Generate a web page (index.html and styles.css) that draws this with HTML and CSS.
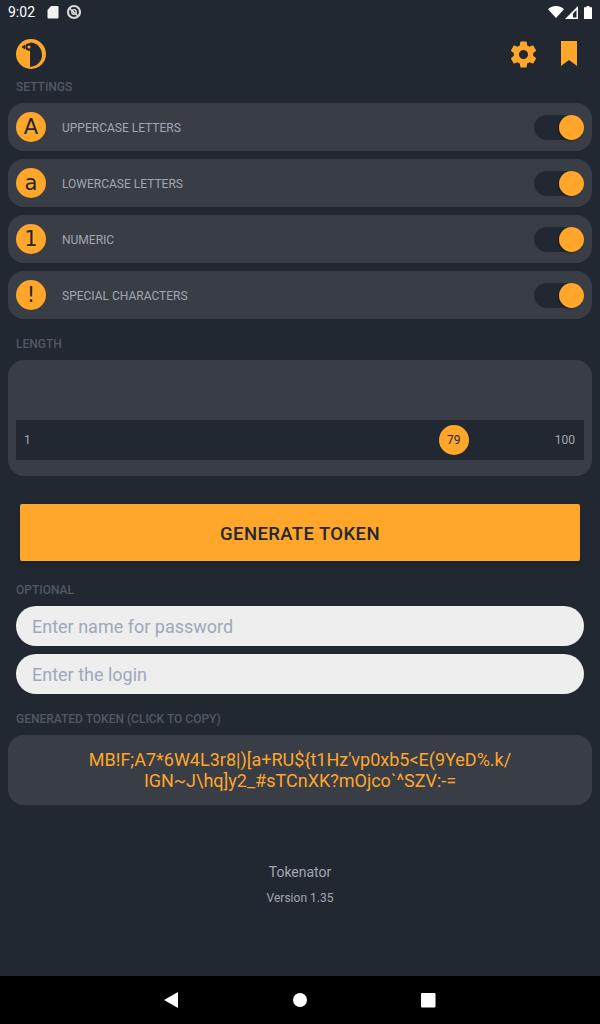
FILE: index.html
```html
<!DOCTYPE html>
<html>
  <head>
    <meta charset='utf-8'>
    <title>Tokenator</title>
    <meta name='viewport' content='width=device-width, initial-scale=1'>
    <link rel="stylesheet" href="styles.css">
  </head>

  <body>
    <div class="status-bar">
      <div class="status-left">
        <span class="clock">9:02</span>
        <svg class="status-icon" width="14" height="14" viewBox="0 0 14 14"><path d="M5 1h6.500a1 1 0 0 1 1 1v10.500a1 1 0 0 1-1 1h-9a1 1 0 0 1-1-1V5z" fill="#f2f2f2"/></svg>
        <svg class="status-icon" width="16" height="16" viewBox="0 0 16 16"><circle cx="8" cy="8" r="6" fill="none" stroke="#d8d8d8" stroke-width="2.200"/><circle cx="8" cy="8" r="2.200" fill="none" stroke="#d8d8d8" stroke-width="1.500"/><path d="M3 4l9 8" stroke="#d8d8d8" stroke-width="1.600"/></svg>
      </div>
      <div class="status-right">
        <svg width="16" height="12" viewBox="0 0 16 12"><path d="M0 3.200C4.500-1 11.500-1 16 3.200L8 12z" fill="#fff"/></svg>
        <svg class="signal" width="13" height="13" viewBox="0 0 13 13"><path d="M13 0v13H0z" fill="#fff"/><path d="M11.500 4v7.500H8V7.500z" fill="#222831"/></svg>
        <svg class="battery" width="8" height="13" viewBox="0 0 8 13"><path d="M2.500 0h3v1.200H8V13H0V1.200h2.500z" fill="#fff"/></svg>
      </div>
    </div>

    <header class="app-header">
      <svg class="logo" width="30" height="30" viewBox="0 0 30 30">
        <circle cx="15" cy="15" r="15" fill="#ffa62b"/>
        <path d="M14 3.500C21 3.500 26 9 26 16c0 6.500-5 11.500-12 12z" fill="#222831"/>
        <circle cx="13" cy="8" r="3.700" fill="#222831"/>
        <circle cx="13" cy="8" r="1.500" fill="#ffa62b"/>
        <path d="M5.500 8l3.500-2.500v5z" fill="#222831"/>
      </svg>
      <div class="header-actions">
        <svg width="31" height="31" viewBox="0 0 24 24"><path fill="#ffa62b" d="M19.430 12.980c.04-.32.070-.64.070-.98s-.03-.66-.07-.98l2.110-1.650c.19-.15.240-.42.120-.64l-2-3.460c-.12-.22-.39-.3-.61-.22l-2.490 1c-.52-.4-1.080-.73-1.690-.98l-.38-2.650C14.460 2.180 14.250 2 14 2h-4c-.25 0-.46.180-.49.420l-.38 2.650c-.61.250-1.170.59-1.690.98l-2.490-1c-.23-.09-.49 0-.61.220l-2 3.460c-.13.220-.07.490.12.640l2.110 1.650c-.04.320-.07.650-.07.980s.03.660.07.980l-2.110 1.650c-.19.150-.24.420-.12.640l2 3.460c.12.220.39.300.61.220l2.490-1c.52.400 1.080.730 1.690.980l.38 2.650c.03.240.24.420.49.420h4c.25 0 .46-.18.49-.42l.38-2.650c.61-.25 1.170-.59 1.690-.98l2.490 1c.23.090.49 0 .61-.22l2-3.460c.12-.22.070-.49-.12-.64zM12 15.500c-1.930 0-3.500-1.570-3.500-3.500s1.570-3.500 3.500-3.500 3.500 1.570 3.500 3.500-1.570 3.500-3.500 3.500z"/></svg>
        <svg width="16" height="26" viewBox="0 0 16 26"><path d="M0 0h16v25l-8-6-8 6z" fill="#ffa62b"/></svg>
      </div>
    </header>

    <main class="content">
      <h2 class="section-label settings-label">SETTINGS</h2>
      <div class="toggle-list">
        <div class="toggle-row">
          <span class="badge">A</span>
          <span class="toggle-name">UPPERCASE LETTERS</span>
          <span class="switch"><span class="knob"></span></span>
        </div>
        <div class="toggle-row">
          <span class="badge">a</span>
          <span class="toggle-name">LOWERCASE LETTERS</span>
          <span class="switch"><span class="knob"></span></span>
        </div>
        <div class="toggle-row">
          <span class="badge">1</span>
          <span class="toggle-name">NUMERIC</span>
          <span class="switch"><span class="knob"></span></span>
        </div>
        <div class="toggle-row">
          <span class="badge">!</span>
          <span class="toggle-name">SPECIAL CHARACTERS</span>
          <span class="switch"><span class="knob"></span></span>
        </div>
      </div>

      <h2 class="section-label length-label">LENGTH</h2>
      <div class="length-card">
        <div class="slider">
          <span>1</span>
          <span class="thumb">79</span>
          <span>100</span>
        </div>
      </div>

      <button class="generate">GENERATE TOKEN</button>

      <h2 class="section-label optional-label">OPTIONAL</h2>
      <div class="inputs">
        <input class="text-input" placeholder="Enter name for password">
        <input class="text-input" placeholder="Enter the login">
      </div>

      <h2 class="section-label token-label">GENERATED TOKEN (CLICK TO COPY)</h2>
      <div class="token-card">MB!F;A7*6W4L3r8|)[a+RU${t1Hz'vp0xb5&lt;E(9YeD%.k/<br>IGN~J\hq]y2_#sTCnXK?mOjco`^SZV:-=</div>

      <footer class="about">
        <div class="app-name">Tokenator</div>
        <div class="version">Version 1.35</div>
      </footer>
    </main>

    <nav class="nav-bar">
      <svg width="16" height="16" viewBox="0 0 16 16"><path d="M14 0v16L0 8z" fill="#fff"/></svg>
      <svg width="16" height="16" viewBox="0 0 16 16"><circle cx="8" cy="8" r="7" fill="#fff"/></svg>
      <svg width="16" height="16" viewBox="0 0 16 16"><rect x="1" y="1" width="14.500" height="14.500" rx="1" fill="#fff"/></svg>
    </nav>
  </body>
</html>
```

FILE: styles.css
```css
* {
  box-sizing: border-box;
}

html,
body {
  height: 100%;
}

body {
  display: flex;
  flex-direction: column;
  margin: 0;
  background: #222831;
  color: #a2a6b3;
  font-family: Roboto, "Liberation Sans", sans-serif;
}

.status-bar {
  display: flex;
  justify-content: space-between;
  align-items: center;
  height: 24px;
  padding: 0 8px;
  color: #fff;
  font-size: 14px;
}

.status-left,
.status-right {
  display: flex;
  align-items: center;
}

.status-left .status-icon {
  margin-left: 6px;
}

.status-left .clock {
  margin-right: 5px;
}

.signal {
  margin-left: 1px;
}

.battery {
  margin-left: 6px;
}

.app-header {
  display: flex;
  justify-content: space-between;
  align-items: center;
  height: 30px;
  margin-top: 15px;
  padding: 0 23px 0 16px;
}

.header-actions {
  display: flex;
  align-items: center;
  gap: 22px;
}

.content {
  flex: 1;
  display: flex;
  flex-direction: column;
}

.section-label {
  margin: 0;
  padding-left: 16px;
  color: #535865;
  font-size: 12px;
  font-weight: 500;
  line-height: 14px;
}

.settings-label {
  margin-top: 11px;
}

.toggle-list {
  display: flex;
  flex-direction: column;
  gap: 8px;
  margin: 9px 8px 0;
}

.toggle-row {
  display: flex;
  align-items: center;
  height: 48px;
  padding: 0 8px;
  border-radius: 16px;
  background: #393e46;
}

.badge {
  display: flex;
  justify-content: center;
  align-items: center;
  width: 30px;
  height: 30px;
  border-radius: 50%;
  background: #ffa62b;
  color: #222831;
  font-family: "DejaVu Sans", sans-serif;
  font-size: 21px;
}

.toggle-name {
  flex: 1;
  margin-left: 16px;
  padding-top: 2px;
  font-size: 12px;
}

.switch {
  position: relative;
  width: 50px;
  height: 25px;
  border-radius: 13px;
  background: #222831;
}

.knob {
  position: absolute;
  top: 0;
  right: 0;
  width: 25px;
  height: 25px;
  border-radius: 50%;
  background: #ffa62b;
  box-shadow: -1px 1px 2px rgba(0, 0, 0, 0.35);
}

.length-label {
  margin-top: 18px;
}

.length-card {
  height: 116px;
  margin: 9px 8px 0;
  padding: 60px 8px 0;
  border-radius: 16px;
  background: #393e46;
}

.slider {
  display: flex;
  justify-content: space-between;
  align-items: center;
  height: 40px;
  padding: 0 9px 0 8px;
  background: #222831;
  font-size: 12px;
}

.thumb {
  display: flex;
  justify-content: center;
  align-items: center;
  width: 30px;
  height: 30px;
  margin-left: 322px;
  border-radius: 50%;
  background: #ffa62b;
  color: #222831;
}

.generate {
  height: 57px;
  margin: 28px 20px 0;
  padding-top: 3px;
  border: 0;
  border-radius: 2px;
  background: #ffa62b;
  box-shadow: 0 2px 4px rgba(0, 0, 0, 0.25);
  color: #222831;
  font-family: inherit;
  font-size: 18.500px;
  font-weight: 500;
  letter-spacing: 0.4px;
}

.optional-label {
  margin-top: 22px;
}

.inputs {
  display: flex;
  flex-direction: column;
  gap: 8px;
  margin: 9px 16px 0;
}

.text-input {
  height: 40px;
  padding: 0 16px;
  border: 0;
  border-radius: 20px;
  background: #eeeeee;
  font-family: inherit;
  font-size: 18px;
}

.text-input::placeholder {
  color: #a0a8b8;
}

.token-label {
  margin-top: 18px;
}

.token-card {
  height: 70px;
  margin: 9px 8px 0;
  padding-top: 14px;
  border-radius: 16px;
  background: #393e46;
  color: #ffa62b;
  font-size: 18px;
  line-height: 21px;
  text-align: center;
}

.about {
  margin-top: 58px;
  text-align: center;
}

.app-name {
  font-size: 14px;
  line-height: 18px;
}

.version {
  margin-top: 9px;
  font-size: 12px;
  line-height: 16px;
}

.nav-bar {
  display: flex;
  justify-content: center;
  align-items: center;
  gap: 112px;
  height: 48px;
  background: #000;
}
```
